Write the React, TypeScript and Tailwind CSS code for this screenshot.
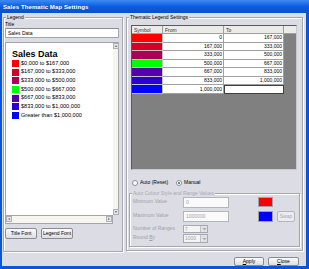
import React from 'react';

const BODY = 'bg-[#dcdce4]';

function Arrow({ dir }: { dir: 'up' | 'down' | 'left' | 'right' }) {
  const pts: Record<string, string> = {
    up: '1,4 3,2 5,4',
    down: '1,2 3,4 5,2',
    left: '4,1 2,3 4,5',
    right: '2,1 4,3 2,5',
  };
  return (
    <svg width="6" height="6" viewBox="0 0 6 6">
      <polygon points={pts[dir]} fill="#606068" />
    </svg>
  );
}

function ScrollBtn({ dir }: { dir: 'up' | 'down' | 'left' | 'right' }) {
  return (
    <div className="w-[6px] h-[6px] shrink-0 bg-[#e4e4e8] border border-[#b0b0b8] flex items-center justify-center">
      <Arrow dir={dir} />
    </div>
  );
}

function Btn({ children, w }: { children: React.ReactNode; w: string }) {
  return (
    <div
      className={`${w} h-full rounded-[2px] border border-[#8a8a92] bg-gradient-to-b from-[#fbfbfb] to-[#dedee2] flex items-center justify-center text-[5px] leading-none text-black`}
    >
      {children}
    </div>
  );
}

function Group({
  label,
  className,
  labelClass,
  children,
}: {
  label: string;
  className: string;
  labelClass?: string;
  children: React.ReactNode;
}) {
  return (
    <div
      className={`relative border border-[#a6a6ae] shadow-[inset_1px_1px_0_#ffffff,1px_1px_0_#ffffff] ${className}`}
    >
      <span
        className={`absolute -top-[4px] left-[2px] px-[1px] ${BODY} text-[5px] leading-[7px] whitespace-nowrap ${
          labelClass ?? 'text-black'
        }`}
      >
        {label}
      </span>
      {children}
    </div>
  );
}

function Combo({ value, h }: { value: string; h: string }) {
  return (
    <div className={`w-[25px] ${h} border border-[#a8a8b0] bg-[#f4f4f4] flex items-center`}>
      <span className="flex-1 pl-[1px] text-[5px] leading-none text-[#a0a0a8]">{value}</span>
      <div className="w-[7px] h-full bg-[#e2e2e6] border-l border-[#c0c0c8] flex items-center justify-center">
        <svg width="5" height="4" viewBox="0 0 5 4">
          <polygon points="0.5,1 4.5,1 2.5,3.2" fill="#a8a8b0" />
        </svg>
      </div>
    </div>
  );
}

export default function App() {
  const legend = [
    { c: '#ff0000', t: '$0,000 to $167,000' },
    { c: '#d4002a', t: '$167,000 to $333,000' },
    { c: '#aa0055', t: '$333,000 to $500,000' },
    { c: '#00ff00', t: '$500,000 to $667,000' },
    { c: '#5500aa', t: '$667,000 to $833,000' },
    { c: '#2a00d4', t: '$833,000 to $1,000,000' },
    { c: '#0000ff', t: 'Greater than $1,000,000' },
  ];
  const rows = [
    { c: '#ff0000', f: '0', t: '167,000' },
    { c: '#d4002a', f: '167,000', t: '333,000' },
    { c: '#aa0055', f: '333,000', t: '500,000' },
    { c: '#00ff00', f: '500,000', t: '667,000' },
    { c: '#5500aa', f: '667,000', t: '833,000' },
    { c: '#2a00d4', f: '833,000', t: '1,000,000' },
    { c: '#0000ff', f: '1,000,000', t: '' },
  ];

  return (
    <div className="w-[309px] h-[269px] bg-[#0a55d8] flex flex-col overflow-hidden font-['Liberation_Sans',Arial,sans-serif]">
      {/* title bar */}
      <div className="h-[13px] shrink-0 bg-gradient-to-b from-[#3d8af2] via-[#0c5ce2] to-[#0a50cc] flex items-center pl-[3px]">
        <span className="text-white font-bold text-[6px] leading-none tracking-[0.1px]">
          Sales Thematic Map Settings
        </span>
      </div>

      {/* body */}
      <div className={`flex-1 ml-[2px] mr-[3px] mb-[3px] ${BODY} flex flex-col`}>
        <div className="flex items-start pt-[4px] pl-[1px] gap-[3px]">
          {/* Legend group */}
          <Group label="Legend" className="w-[120px] h-[235px] flex flex-col pl-[1px]">
            <span className="mt-[3px] h-[6px] text-[5px] leading-[6px] text-black">Title</span>
            <div className="mt-[1px] w-[114px] h-[10px] bg-white border border-[#a4a4ac] border-t-[#8c8c94] flex items-center pl-[2px]">
              <span className="text-[5px] leading-none text-black">Sales Data</span>
            </div>
            <div className="mt-[4px] w-[114px] h-[182px] flex flex-col">
              <div className="flex h-[173px]">
                <div className="flex-1 bg-white border-l border-t border-[#a4a4ac] pt-[7px] pl-[6px] flex flex-col">
                  <span className="text-[9px] leading-[9px] font-bold text-black">Sales Data</span>
                  {legend.map((l) => (
                    <div key={l.t} className="h-[8.7px] flex items-center gap-[2px]">
                      <div className="w-[7px] h-[7px] shrink-0" style={{ background: l.c }} />
                      <span className="text-[5.6px] leading-none text-black whitespace-nowrap">{l.t}</span>
                    </div>
                  ))}
                </div>
                <div className="w-[6px] bg-[#f6f6ee] flex flex-col justify-between border-t border-r border-[#a4a4ac]">
                  <ScrollBtn dir="up" />
                  <ScrollBtn dir="down" />
                </div>
              </div>
              <div className="flex h-[9px]">
                <div className="flex-1 bg-[#f6f6ee] border border-[#a4a4ac] flex justify-between items-start">
                  <ScrollBtn dir="left" />
                  <ScrollBtn dir="right" />
                </div>
                <div className="w-[6px]" />
              </div>
            </div>
            <div className="mt-[4px] h-[11px] flex gap-[4px]">
              <Btn w="w-[32px]">Title Font</Btn>
              <Btn w="w-[32px]">Legend Font</Btn>
            </div>
          </Group>

          {/* Thematic Legend Settings group */}
          <Group label="Thematic Legend Settings" className="w-[177px] h-[234px] flex flex-col">
            {/* grid */}
            <div className="mt-[7px] ml-[4px] w-[166px] h-[145px] bg-[#808080] border border-[#5a5a5a] border-r-[#c8c8d0] border-b-[#c8c8d0]">
              <div className="flex h-[8px] bg-[#ececE6] border-b border-[#a0a0a0]">
                <div className="w-[31px] border-r border-[#a0a0a0] pl-[2px] text-[5px] leading-[8px] text-[#303030]">Symbol</div>
                <div className="w-[61px] border-r border-[#a0a0a0] pl-[2px] text-[5px] leading-[8px] text-[#303030]">From</div>
                <div className="w-[60px] border-r border-[#a0a0a0] pl-[2px] text-[5px] leading-[8px] text-[#303030]">To</div>
              </div>
              {rows.map((r, i) => (
                <div key={i} className="flex h-[8.55px]">
                  <div className="w-[31px] border-r border-b border-[#c0c0c0]" style={{ background: r.c }} />
                  <div className="w-[61px] bg-white border-r border-b border-[#a0a0a0] flex items-center justify-end pr-[1px] text-[5px] leading-none text-black">
                    {r.f}
                  </div>
                  {i === rows.length - 1 ? (
                    <div className="w-[60px] bg-white border border-[#404040]" />
                  ) : (
                    <div className="w-[60px] bg-white border-r border-b border-[#a0a0a0] flex items-center justify-end pr-[1px] text-[5px] leading-none text-black">
                      {r.t}
                    </div>
                  )}
                </div>
              ))}
            </div>

            {/* radios */}
            <div className="mt-[9px] ml-[5px] h-[7px] flex items-center">
              <div className="w-[6px] h-[6px] rounded-full bg-white border border-[#8090a8]" />
              <span className="ml-[2px] text-[5px] leading-none text-black">Auto (Reset)</span>
              <div className="ml-[8px] w-[6px] h-[6px] rounded-full bg-white border border-[#8090a8] flex items-center justify-center">
                <div className="w-[2px] h-[2px] rounded-full bg-[#208020]" />
              </div>
              <span className="ml-[2px] text-[5px] leading-none text-black">Manual</span>
            </div>

            {/* inner group */}
            <Group
              label="Auto Colour Style and Range Values"
              labelClass="text-[#a8a8b0]"
              className="mt-[7px] ml-[2px] w-[171px] h-[54px] flex flex-col pl-[3px]"
            >
              <div className="mt-[3px] h-[11px] flex items-start">
                <span className="w-[50px] pt-[2px] text-[5px] leading-none text-[#a0a0a8]">Minimum Value</span>
                <div className="w-[46px] h-full bg-[#fafafa] border border-[#b4b4bc] flex items-center pl-[2px] text-[5px] leading-none text-[#a0a0a8]">
                  0
                </div>
                <div className="ml-[29px] w-[15px] h-[10px] bg-[#ff0000] border border-[#a0a0a8]" />
              </div>
              <div className="mt-[3px] h-[11px] flex items-start">
                <span className="w-[50px] pt-[2px] text-[5px] leading-none text-[#a0a0a8]">Maximum Value</span>
                <div className="w-[46px] h-full bg-[#fafafa] border border-[#b4b4bc] flex items-center pl-[2px] text-[5px] leading-none text-[#a0a0a8]">
                  1000000
                </div>
                <div className="ml-[29px] w-[15px] h-[11px] bg-[#0000ff] border border-[#a0a0a8]" />
                <div className="ml-[4px] w-[18px] h-[11px] rounded-[2px] border border-[#b4b4bc] bg-[#ececee] flex items-center justify-center text-[5px] leading-none text-[#a8a8b0]">
                  Swap
                </div>
              </div>
              <div className="mt-[3px] h-[8px] flex items-start">
                <span className="w-[50px] pt-[1px] text-[5px] leading-none text-[#a0a0a8]">Number of Ranges</span>
                <Combo value="7" h="h-[8px]" />
              </div>
              <div className="mt-[1px] h-[9px] flex items-start">
                <span className="w-[50px] pt-[1px] text-[5px] leading-none text-[#a0a0a8]">
                  Round <span className="underline">B</span>y
                </span>
                <Combo value="1000" h="h-[9px]" />
              </div>
            </Group>
          </Group>
        </div>

        {/* bottom buttons */}
        <div className="mt-[5px] h-[9px] flex justify-end gap-[4px] pr-[7px]">
          <Btn w="w-[30px]">
            <span>
              <span className="underline">A</span>pply
            </span>
          </Btn>
          <Btn w="w-[31px]">
            <span>
              <span className="underline">C</span>lose
            </span>
          </Btn>
        </div>
      </div>
    </div>
  );
}
